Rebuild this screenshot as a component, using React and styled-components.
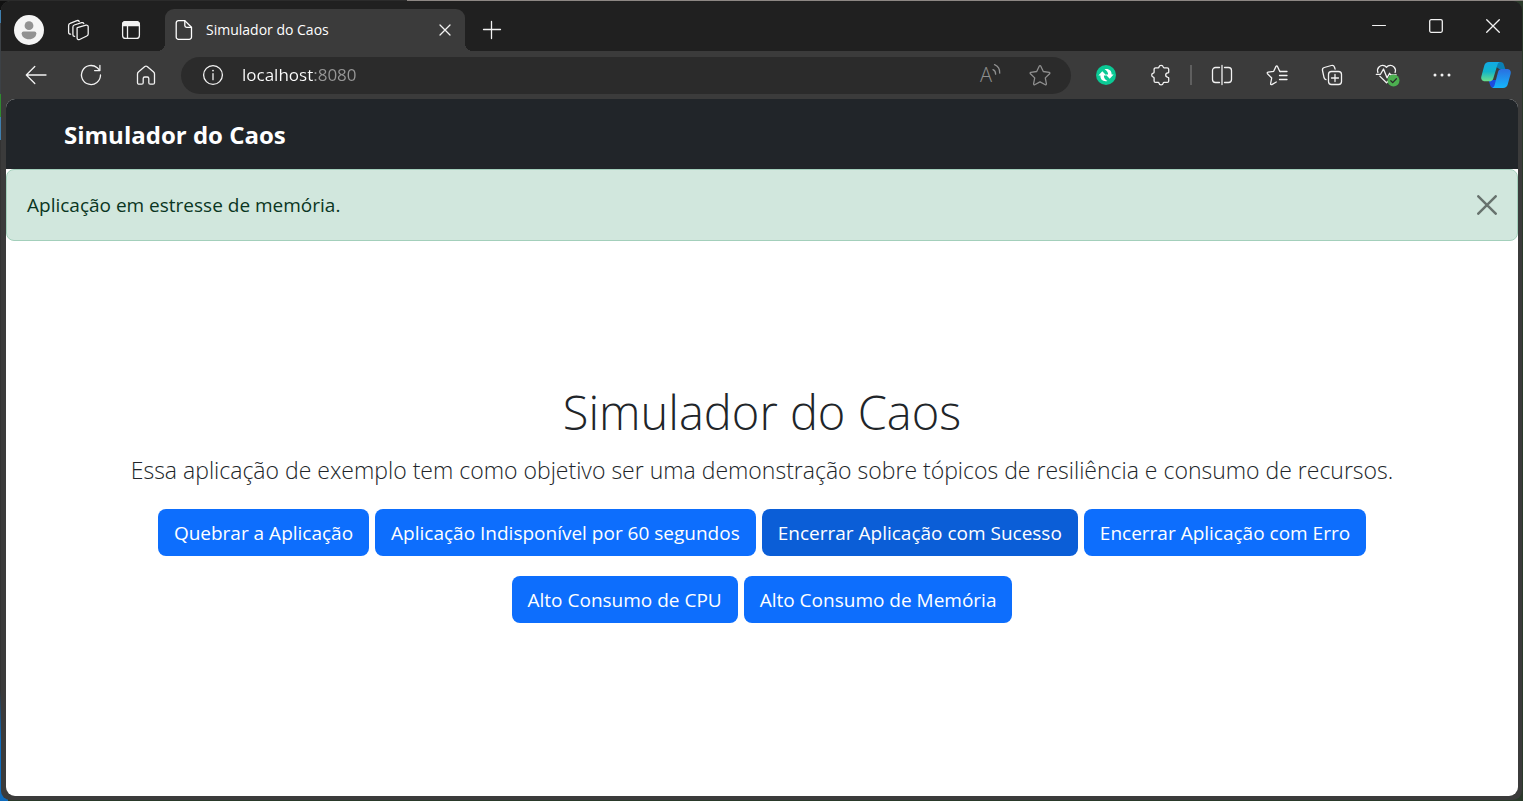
import { useState } from 'react';
import styled, { createGlobalStyle } from 'styled-components';

const GlobalStyle = createGlobalStyle`
  * {
    box-sizing: border-box;
  }

  body {
    margin: 0;
    font-family: 'Open Sans', 'Noto Sans', sans-serif;
    background: #2b2b2b;
  }

  button {
    padding: 0;
    border: 0;
    background: none;
    font-family: inherit;
    cursor: pointer;
  }
`
const Desktop = styled.div`
  min-height: 100vh;
  padding: 1px;
  display: flex;
  background:
    linear-gradient(to right, #2b2b2b 407px, #8d8784 407px) top / 100% 1px no-repeat,
    linear-gradient(to bottom, #111 10px, #3f7fae 10px 23px, #3c4146 23px 94px, #2f8a2f 94px 117px, #3f7fae 117px 140px, #333 140px 690px, #0f6cbd 740px) left / 8px 100% no-repeat,
    #2a3a2a;
`
const BrowserWindow = styled.div`
  flex: 1;
  display: flex;
  flex-direction: column;
  background: #3b3b3b;
  border-radius: 9px;
  overflow: hidden;
`
const TitleBar = styled.header`
  height: 50px;
  display: flex;
  background: #202020;
`
const BarButton = styled.button`
  width: ${({ $width }) => $width || 55}px;
  height: ${({ $height }) => $height || 48}px;
  flex-shrink: 0;
  display: flex;
  align-items: center;
  justify-content: center;
  color: ${({ $dim }) => ($dim ? '#8f8f8f' : '#f2f2f2')};
`
const TitleTools = styled.div`
  display: flex;
  align-items: center;
  padding: 8px 8px 0 3px;
`
const Tab = styled.div`
  position: relative;
  width: 300px;
  height: 42px;
  margin-top: 8px;
  padding: 0 12px 0 7px;
  display: flex;
  align-items: center;
  background: #3b3b3b;
  border-radius: 9px 9px 0 0;
  color: #fff;

  /* flared feet of the active tab */
  &:before,
  &:after {
    content: '';
    position: absolute;
    bottom: 0;
    width: 8px;
    height: 8px;
  }
  &:before {
    left: -8px;
    background: radial-gradient(circle at 0 0, transparent 8px, #3b3b3b 8px);
  }
  &:after {
    right: -8px;
    background: radial-gradient(circle at 100% 0, transparent 8px, #3b3b3b 8px);
  }
`
const TabTitle = styled.span`
  flex: 1;
  margin-left: 10px;
  font-size: 14px;
  line-height: 20px;
  white-space: nowrap;
`
const NewTab = styled.div`
  flex: 1;
  padding: 8px 0 0 12px;
`
const WindowControls = styled.div`
  display: flex;
  padding-right: 1px;
`
const Toolbar = styled.div`
  height: 48px;
  padding-left: 7px;
  display: flex;
  align-items: center;
`
const AddressBar = styled.div`
  flex: 1;
  height: 37px;
  margin: 0 7px 0 8px;
  padding: 0 6px 0 20px;
  display: flex;
  align-items: center;
  background: #2b2b2b;
  border-radius: 19px;
  color: #f2f2f2;
`
const AddressInput = styled.input`
  flex: 1;
  min-width: 0;
  margin-left: 17px;
  padding: 0;
  border: 0;
  outline: 0;
  font-family: inherit;
  font-size: 17px;
  line-height: 24px;
  color: transparent;
  background: linear-gradient(to right, #fff 71px, #979797 71px);
  -webkit-background-clip: text;
  background-clip: text;
`
const Separator = styled.span`
  width: 2px;
  height: 20px;
  margin: 0 2px;
  background: #5f5f5f;
`
const Page = styled.div`
  flex: 1;
  margin: 0 4px 4px 5px;
  display: flex;
  flex-direction: column;
  background: #fff;
  border-radius: 9px;
  overflow: hidden;
  color: #212529;
`
const Navbar = styled.nav`
  height: 70px;
  padding: 2px 58px 0;
  display: flex;
  align-items: center;
  background: #212529;
`
const Brand = styled.a`
  font-size: 24px;
  font-weight: 700;
  line-height: 38px;
  color: #fff;
  text-decoration: none;
`
const Alert = styled.div`
  padding: 20px;
  display: flex;
  align-items: center;
  justify-content: space-between;
  background: #d1e7dd;
  border: 1px solid #a3cfbb;
  border-radius: 8px;
  font-size: 19px;
  line-height: 30px;
  color: #0a3622;
`
const CloseAlert = styled.button`
  width: 20px;
  height: 20px;
  display: flex;
  color: #000;
  opacity: 0.5;
`
const Hero = styled.main`
  flex: 1;
  padding: 0 20px 33px;
  display: flex;
  flex-direction: column;
  align-items: center;
  justify-content: center;
  text-align: center;
`
const Title = styled.h1`
  margin: 0 0 8px;
  font-size: 47px;
  font-weight: 300;
  line-height: 62px;
`
const Lead = styled.p`
  margin: 0 0 20px;
  font-size: 23px;
  font-weight: 300;
  line-height: 38px;
`
const Actions = styled.div`
  max-width: 1320px;
  display: flex;
  flex-wrap: wrap;
  justify-content: center;
  gap: 20px 6px;
`
const ActionButton = styled.button`
  && {
    height: 47px;
    padding: 0 16px;
    border-radius: 8px;
    background: ${({ $pressed }) => ($pressed ? '#0b5ed7' : '#0d6efd')};
    color: #fff;
    font-size: 19px;
    line-height: 30px;
  }
  &&:hover {
    background: #0b5ed7;
  }
`
const Svg = styled.svg`
  display: block;
  flex-shrink: 0;
  overflow: visible;
  fill: none;
  stroke: currentColor;
  stroke-width: 1.3;
  stroke-linecap: round;
  stroke-linejoin: round;
`

const Icon = ({ size = 24, children }) => (
  <Svg width={size} height={size} viewBox={`0 0 ${size} ${size}`} aria-hidden="true">{children}</Svg>
)

const ProfileIcon = () => (
  <Icon size={30}>
    <circle cx="15" cy="15" r="15" fill="#f5f5f5" stroke="none" />
    <circle cx="15" cy="10.7" r="4.4" fill="#929292" stroke="none" />
    <path d="M9.5 16.4h11a1.8 1.8 0 0 1 1.8 1.8c0 3.6-3 6-7.3 6s-7.3-2.4-7.3-6a1.8 1.8 0 0 1 1.8-1.8z" fill="#929292" stroke="none" />
  </Icon>
)

const WorkspacesIcon = () => (
  <Icon>
    <path d="M10.3 9.6l8.7-2.4c1.2-.3 2.2.4 2.2 1.6v7.3c0 .9-.5 1.6-1.4 1.9l-7.2 3.5c-1.2.5-2.5 0-2.5-1.4v-8.6c0-1-.3-1.6.2-1.9z" />
    <path d="M7.6 18.4c-1.2 0-1.7-.6-1.7-1.6V9c0-1 .5-1.7 1.4-2l7.3-2.3c1-.3 1.9.1 2.2.9" />
    <path d="M3.6 16.2c-1.2 0-2-.6-2-1.7V7.4c0-1 .5-1.8 1.5-2.1l6.8-2.6c1-.4 1.9-.1 2.3.8" />
  </Icon>
)

const TabMenuIcon = () => (
  <Icon>
    <rect x="3.6" y="3.6" width="16.8" height="16.8" rx="3" />
    <path d="M3.6 7.5V6.6a3 3 0 0 1 3-3h10.8a3 3 0 0 1 3 3v.9z" fill="currentColor" />
    <path d="M8.5 8v12.4" />
  </Icon>
)

const PageIcon = () => (
  <Icon>
    <path d="M6.5 2.6h6.3l6.7 6.7v9.7a2.3 2.3 0 0 1-2.3 2.3H6.5A2.3 2.3 0 0 1 4.2 19V4.9a2.3 2.3 0 0 1 2.3-2.3z" />
    <path d="M12.8 2.8v4.7c0 1.2.6 1.8 1.8 1.8h4.8" />
  </Icon>
)

const BackIcon = () => (
  <Icon>
    <path d="M22 12H2.5M10.8 3.5L2.3 12l8.5 8.5" />
  </Icon>
)

const ReloadIcon = () => (
  <Icon>
    <path d="M21.5 12a9.5 9.5 0 1 1-3.3-7.2l2 1.9" />
    <path d="M20.9 2.3v5.3h-5.3" />
  </Icon>
)

const HomeIcon = () => (
  <Icon>
    <path d="M10.8 3.6a1.8 1.8 0 0 1 2.4 0l6.4 5.5c.6.5.9 1.1.9 1.9v8.7c0 .9-.6 1.5-1.5 1.5h-2.7c-.9 0-1.5-.6-1.5-1.5v-4.2c0-.9-.6-1.5-1.5-1.5h-2.600c-.9 0-1.5.6-1.5 1.5v4.2c0 .9-.6 1.5-1.5 1.5H5c-.9 0-1.5-.6-1.5-1.5V11c0-.8.3-1.4.9-1.9z" />
  </Icon>
)

const InfoIcon = () => (
  <Icon>
    <circle cx="12" cy="12" r="9.4" />
    <path d="M12 10.7v6" />
    <circle cx="12" cy="7.6" r=".9" fill="currentColor" stroke="none" />
  </Icon>
)

const ReadAloudIcon = () => (
  <Icon size={26}>
    <text x="3" y="20" fontSize="20" fontWeight="300" fill="currentColor" stroke="none">A</text>
    <path d="M16 7.6c1.8.8 2.7 2.5 2.6 4.6M17.5 2.6c3.4 1.3 5.4 4.7 5.2 8.5" />
  </Icon>
)

const StarIcon = () => (
  <Icon>
    <path d="M11.3 3c.3-.6 1.1-.6 1.4 0l2.6 5.500 5.9.8c.7.1.9.9.4 1.4l-4.3 4.2 1.1 6c.1.7-.6 1.1-1.1.8L12 18.900l-5.3 2.8c-.5.3-1.2-.1-1.1-.8l1.1-6-4.3-4.2c-.5-.5-.3-1.3.4-1.4l5.9-.8z" />
  </Icon>
)

const SyncBadgeIcon = () => (
  <Icon>
    <circle cx="12" cy="12" r="10" fill="#0bc995" stroke="none" />
    <g fill="#fff" stroke="none">
      <path d="M10.5 6.2c4.3-1 7.3 1.5 7.1 5.3h2l-3.9 4.3-4.1-4.3h2.5c.1-2.2-1.3-4-3.600-5.300z" />
      <path d="M13.5 18c-4.3 1-7.3-1.5-7.1-5.5h-2l3.9-4.3 4.1 4.3H9.900c-.1 2.4 1.3 4.2 3.6 5.5z" />
    </g>
  </Icon>
)

const PuzzleIcon = () => (
  <Icon>
    <path d="M6.600 4.800h2.500c.6 0 .8-.3.900-.8.200-1.100 1-1.700 2.100-1.700s1.900.6 2.100 1.700c.1.500.4.800.9.800h3.100c.9 0 1.500.6 1.500 1.500v2.900c0 .5-.3.700-.8.700-1.300.1-2.200 1-2.200 2.200s.9 2.100 2.200 2.200c.5 0 .8.300.8.800v2.800c0 .9-.6 1.500-1.500 1.500h-3.100c-.5 0-.8.300-.9.800-.2 1.100-1 1.700-2.100 1.700s-1.900-.6-2.100-1.700c-.1-.5-.3-.8-.9-.8H6.600c-.9 0-1.500-.6-1.500-1.500v-3c0-.5-.3-.7-.8-.8-1-.2-1.600-1-1.600-2s.6-1.800 1.600-2c.5-.1.800-.3.800-.8v-3c0-.9.600-1.500 1.500-1.500z" />
  </Icon>
)

const SplitIcon = () => (
  <Icon>
    <path d="M9.500 4.500h-4a3 3 0 0 0-3 3v9a3 3 0 0 0 3 3h4M14.500 4.500h4a3 3 0 0 1 3 3v9a3 3 0 0 1-3 3h-4M12 2.500v19" />
  </Icon>
)

const FavoritesIcon = () => (
  <Icon>
    <path d="M15.8 8.5h-1l-2.3-5.1c-.3-.7-1.2-.7-1.5 0L8.7 8.3 3 9.2c-.8.1-1 .9-.5 1.5l4.2 4.3-1.1 5.7c-.1.8.6 1.2 1.2.9l4.5-2.6" />
    <path d="M14.5 12.5h7.5M14.5 16.5h7.5M15.8 8.5H22" />
  </Icon>
)

const CollectionsIcon = () => (
  <Icon>
    <path d="M6 16.7c-1-.2-1.6-.9-1.9-1.900L2.5 7.5C2.2 6 2.9 4.9 4.3 4.5l7-2c1.5-.4 2.7.2 3.2 1.7l.6 1.9" />
    <rect x="8.5" y="8.5" width="13" height="13" rx="3" />
    <path d="M15 11.5v7M11.5 15h7" />
  </Icon>
)

const EssentialsIcon = () => (
  <Icon size={26}>
    <path d="M3.9 10.5c-.7-2-.3-4.1 1.1-5.5 2.2-2.2 5.5-2 7.5.2 2-2.2 5.3-2.4 7.5-.2 1.4 1.4 1.8 3.5 1.1 5.5M5.8 14.1l6.7 6.7 1.6-1.6" />
    <path d="M2.3 12.3h4.2l3-5.3 3.5 8.8 2.6-4.5 1 1.5h5.6" />
    <circle cx="19.5" cy="18.5" r="6" fill="#4caf50" stroke="none" />
    <path d="M16.8 18.7l1.9 1.9 3.7-3.9" stroke="#2b2b2b" />
  </Icon>
)

const MoreIcon = () => (
  <Icon>
    <g fill="currentColor" stroke="none">
      <circle cx="5" cy="12" r="1.5" />
      <circle cx="12" cy="12" r="1.5" />
      <circle cx="19" cy="12" r="1.5" />
    </g>
  </Icon>
)

const CopilotIcon = () => (
  <Icon size={30}>
    <defs>
      <linearGradient id="copilotLeft" x1="0" y1="0" x2="0" y2="1">
        <stop offset="0" stopColor="#12a9e6" />
        <stop offset=".5" stopColor="#12b5c9" />
        <stop offset="1" stopColor="#6be08a" />
      </linearGradient>
      <linearGradient id="copilotRight" x1="0" y1="0" x2="0" y2="1">
        <stop offset="0" stopColor="#2a6fe0" />
        <stop offset="1" stopColor="#15b5fb" />
      </linearGradient>
    </defs>
    <g stroke="none">
      <path d="M16 2h3.5c1.9 0 2.9 1 3.4 2.7L24.3 9h-6l-3-2z" fill="#0a7fb4" />
      <path d="M7.500 20l1.700 5.200c.5 1.800 1.500 2.800 3.400 2.800H15l3-8z" fill="#1c4be0" />
      <path d="M8 2h11c-1.500.4-2.200 1.500-2.700 3.200l-4 13.300c-.6 1.900-1.800 2.800-3.700 2.800H4c-2.900 0-4.400-2.200-3.600-5L3.300 5.500C4 3.300 5.500 2 8 2z" fill="url(#copilotLeft)" />
      <path d="M20.600 9H26c2.900 0 4.400 2.200 3.600 5l-2.900 10.500c-.6 2.300-2.200 3.500-4.700 3.500H11c1.500-.4 2.200-1.500 2.700-3.200l3.400-13c.6-1.900 1.600-2.800 3.500-2.800z" fill="url(#copilotRight)" />
    </g>
  </Icon>
)

const actions = [
  { label: 'Quebrar a Aplicação' },
  { label: 'Aplicação Indisponível por 60 segundos' },
  { label: 'Encerrar Aplicação com Sucesso', pressed: true },
  { label: 'Encerrar Aplicação com Erro' },
  { label: 'Alto Consumo de CPU' },
  { label: 'Alto Consumo de Memória' },
]

export default function App() {
  const [address, setAddress] = useState('localhost:8080');
  const [showAlert, setShowAlert] = useState(true);

  const addressHandler = (e) => {
    setAddress(e.target.value);
  }

  return <>
    <GlobalStyle />
    <Desktop>
      <BrowserWindow>
        <TitleBar>
          <TitleTools>
            <BarButton $width={50} $height={42} aria-label="Perfil"><ProfileIcon /></BarButton>
            <BarButton $width={50} $height={42} aria-label="Workspaces"><WorkspacesIcon /></BarButton>
            <BarButton $width={53} $height={42} aria-label="Menu de guias"><TabMenuIcon /></BarButton>
          </TitleTools>
          <Tab>
            <PageIcon />
            <TabTitle>Simulador do Caos</TabTitle>
            <BarButton $width={16} $height={24} aria-label="Fechar guia">
              <Icon size={12}><path d="M1 1l10 10M11 1L1 11" /></Icon>
            </BarButton>
          </Tab>
          <NewTab>
            <BarButton $width={30} $height={42} aria-label="Nova guia">
              <Icon size={18}><path d="M8.5 .5v17M.5 8.5h17" /></Icon>
            </BarButton>
          </NewTab>
          <WindowControls>
            <BarButton $width={57} $height={50} aria-label="Minimizar">
              <Icon size={14}><path d="M.5 6.5h13" strokeWidth="1" /></Icon>
            </BarButton>
            <BarButton $width={57} $height={50} aria-label="Maximizar">
              <Icon size={14}><rect x=".7" y=".7" width="12.6" height="12.6" rx="1.5" /></Icon>
            </BarButton>
            <BarButton $width={57} $height={50} aria-label="Fechar">
              <Icon size={14}><path d="M.7.7l12.6 12.6M13.3.7L.7 13.3" /></Icon>
            </BarButton>
          </WindowControls>
        </TitleBar>

        <Toolbar>
          <BarButton aria-label="Voltar"><BackIcon /></BarButton>
          <BarButton aria-label="Atualizar"><ReloadIcon /></BarButton>
          <BarButton aria-label="Página inicial"><HomeIcon /></BarButton>
          <AddressBar>
            <InfoIcon />
            <AddressInput aria-label="Endereço" type="text" value={address} onChange={addressHandler} />
            <BarButton $width={50} $height={37} $dim aria-label="Ler em voz alta"><ReadAloudIcon /></BarButton>
            <BarButton $width={50} $height={37} $dim aria-label="Favoritar"><StarIcon /></BarButton>
          </AddressBar>
          <BarButton aria-label="Sincronizar"><SyncBadgeIcon /></BarButton>
          <BarButton aria-label="Extensões"><PuzzleIcon /></BarButton>
          <Separator />
          <BarButton aria-label="Dividir tela"><SplitIcon /></BarButton>
          <BarButton aria-label="Favoritos"><FavoritesIcon /></BarButton>
          <BarButton aria-label="Coleções"><CollectionsIcon /></BarButton>
          <BarButton aria-label="Desempenho"><EssentialsIcon /></BarButton>
          <BarButton aria-label="Configurações"><MoreIcon /></BarButton>
          <BarButton $width={53} aria-label="Copilot"><CopilotIcon /></BarButton>
        </Toolbar>

        <Page>
          <Navbar>
            <Brand href="#">Simulador do Caos</Brand>
          </Navbar>
          {showAlert
          ? <Alert role="alert">
              <span>Aplicação em estresse de memória.</span>
              <CloseAlert aria-label="Fechar" onClick={() => setShowAlert(false)}>
                <Icon size={20}><path d="M1.3 1.3l17.4 17.4M18.7 1.3L1.3 18.7" strokeWidth="2.5" /></Icon>
              </CloseAlert>
            </Alert>
          : null}
          <Hero>
            <Title>Simulador do Caos</Title>
            <Lead>Essa aplicação de exemplo tem como objetivo ser uma demonstração sobre tópicos de resiliência e consumo de recursos.</Lead>
            <Actions>
              {actions.map(({ label, pressed }) => (
                <ActionButton key={label} $pressed={pressed}>{label}</ActionButton>
              ))}
            </Actions>
          </Hero>
        </Page>
      </BrowserWindow>
    </Desktop>
  </>
}
